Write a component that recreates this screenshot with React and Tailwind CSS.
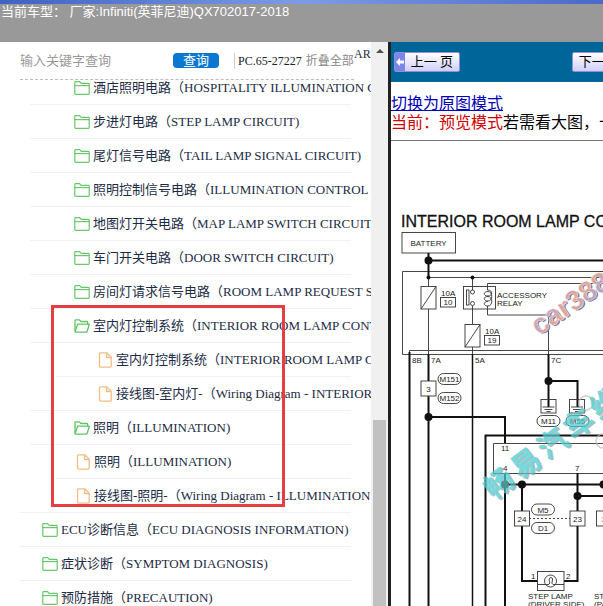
import React from "react";

const rows = [
  { icon: "folder", indent: "ml-[30px] pl-11", zh: "酒店照明电路", en: "HOSPITALITY ILLUMINATION CIRCUIT)" },
  { icon: "folder", indent: "ml-[30px] pl-11", zh: "步进灯电路", en: "STEP LAMP CIRCUIT)" },
  { icon: "folder", indent: "ml-[30px] pl-11", zh: "尾灯信号电路", en: "TAIL LAMP SIGNAL CIRCUIT)" },
  { icon: "folder", indent: "ml-[30px] pl-11", zh: "照明控制信号电路", en: "ILLUMINATION CONTROL SIGNAL CIRCUIT)" },
  { icon: "folder", indent: "ml-[30px] pl-11", zh: "地图灯开关电路", en: "MAP LAMP SWITCH CIRCUIT)" },
  { icon: "folder", indent: "ml-[30px] pl-11", zh: "车门开关电路", en: "DOOR SWITCH CIRCUIT)" },
  { icon: "folder", indent: "ml-[30px] pl-11", zh: "房间灯请求信号电路", en: "ROOM LAMP REQUEST SIGNAL CIRCUIT)" },
  { icon: "open", indent: "ml-[30px] pl-11", zh: "室内灯控制系统", en: "INTERIOR ROOM LAMP CONTROL SYSTEM)" },
  { icon: "file", indent: "ml-14 pl-[42px]", zh: "室内灯控制系统", en: "INTERIOR ROOM LAMP CONTROL SYSTEM)" },
  { icon: "file", indent: "ml-[30px] pl-[68px]", zh: "接线图-室内灯-", en: "Wiring Diagram - INTERIOR ROOM LAMP)" },
  { icon: "open", indent: "ml-[30px] pl-11", zh: "照明", en: "ILLUMINATION)" },
  { icon: "file", indent: "ml-14 pl-5", zh: "照明", en: "ILLUMINATION)" },
  { icon: "file", indent: "ml-5 pl-14", zh: "接线图-照明-", en: "Wiring Diagram - ILLUMINATION" },
  { icon: "folder", indent: "ml-5 pl-[22px]", zh: "ECU诊断信息", en: "ECU DIAGNOSIS INFORMATION)" },
  { icon: "folder", indent: "ml-5 pl-[22px]", zh: "症状诊断", en: "SYMPTOM DIAGNOSIS)" },
  { icon: "folder", indent: "ml-5 pl-[22px]", zh: "预防措施", en: "PRECAUTION)" },
];

const RowIcon = ({ type }) => {
  if (type === "file") {
    return (
      <svg className="h-4 w-[15px] shrink-0" viewBox="0 0 15 16" fill="none" stroke="#f3bd83" strokeWidth="1.3" strokeLinejoin="round">
        <path d="M1.5 2 Q1.5 .8 2.7 .8 H8.8 L13.2 5.2 V14 Q13.2 15.2 12 15.2 H2.7 Q1.5 15.2 1.5 14 Z" />
        <path d="M8.6 1 V5.5 H13" />
      </svg>
    );
  }
  if (type === "open") {
    return (
      <svg className="h-4 w-4 shrink-0" viewBox="0 0 16 16" fill="none" stroke="#5fc463" strokeWidth="1.3" strokeLinejoin="round">
        <path d="M1 13.5 V2.6 Q1 1.8 1.8 1.8 H5.4 L6.8 3.5 H12.8 Q13.6 3.5 13.6 4.3 V6" />
        <path d="M1 13.7 L3.6 6.2 H15.3 L13.3 13 Q13 14.2 12 14.2 H1.4 Z" />
      </svg>
    );
  }
  return (
    <svg className="h-4 w-4 shrink-0" viewBox="0 0 16 16" fill="none" stroke="#68c86b" strokeWidth="1.2" strokeLinejoin="round">
      <path d="M.8 2.4 Q.8 1.6 1.6 1.6 H5.6 L7.2 3.3 H14.4 Q15.2 3.3 15.2 4.1 V13.6 Q15.2 14.4 14.4 14.4 H1.6 Q.8 14.4 .8 13.6 Z" />
      <path d="M.8 5.6 H15.2" />
    </svg>
  );
};

const Pill = ({ x, y, w = 23, label }) => (
  <g>
    <rect x={x} y={y} width={w} height="11" rx="5.5" fill="#fff" stroke="#333" strokeWidth="0.9" />
    <text x={x + w / 2} y={y + 8.5} textAnchor="middle">{label}</text>
  </g>
);

const Pin = ({ x, y, label }) => (
  <g>
    <rect x={x - 7.5} y={y} width="15" height="15" fill="#fff" stroke="#333" strokeWidth="0.9" />
    <text x={x} y={y + 10.5} textAnchor="middle">{label}</text>
  </g>
);

const Fuse = ({ x, y, label }) => (
  <g fill="none" stroke="#333" strokeWidth="0.9">
    <rect x={x - 7.5} y={y} width="15" height="22.5" />
    <path d={`M${x - 7.5} ${y + 22.5} L${x + 7.5} ${y}`} />
    <rect x={x + 12} y={y + 11} width="15" height="9.5" />
    <g fill="#222" stroke="none">
      <text x={x + 12.5} y={y + 9.5}>10A</text>
      <text x={x + 19.5} y={y + 18.7} textAnchor="middle">{label}</text>
    </g>
  </g>
);

const Ground = ({ x }) => (
  <g fill="none" stroke="#333" strokeWidth="0.9">
    <rect x={x - 7.5} y="399.5" width="15" height="13.5" />
    <path d={`M${x - 6} 407 h12 M${x - 4} 409.5 h8 M${x - 2} 411.5 h4`} />
  </g>
);

const WiringDiagram = () => (
  <svg
    className="h-[465px] w-[212px] shrink-0 overflow-visible"
    viewBox="391 141 212 465"
    fontFamily="Liberation Sans, sans-serif"
    fontSize="8"
    fill="#222"
    role="img"
    aria-label="INTERIOR ROOM LAMP CONTROL SYSTEM"
  >
    <text x="401" y="227" fontSize="16" fill="#111" stroke="#111" strokeWidth="0.3">INTERIOR ROOM LAMP CONTROL</text>

    {/* thin lines */}
    <g fill="none" stroke="#333" strokeWidth="0.9">
      <rect x="402" y="232.5" width="53.5" height="20.5" />
      <path d="M640 271.5 H402.5 V354.5 H640" />
      <path d="M409.5 354 V350.5 H640" />
      <path d="M428.5 277.5 H640 M428.5 271 V286.5 M428.5 309 V354" />
      <path d="M472.5 277.5 V290 M472.5 306 V324 M472.5 347 V354" />
      <rect x="463.5" y="286.5" width="32" height="22.5" />
      <rect x="466.5" y="290" width="2.5" height="15" />
      <circle cx="472.5" cy="292" r="2" fill="#fff" />
      <circle cx="472.5" cy="303.5" r="2" fill="#fff" />
      <path d="M640 283.5 H487.5 V290 M487.5 306 V315 H548.5 V354" />
      <path d="M487.5 290 C493 290 493 296 488 296 C483 296 483 291.5 488 291.5 C493 291.5 493 301 488 301 C483 301 483 296.5 488 296.5 C493 296.5 493 306 488 306 C483 306 483 301.5 488 301.5" />
      <path d="M640 443.5 H493.5 V473.5 H640" />
      <path d="M529 518.5 H570" strokeDasharray="2 2" />
    </g>

    {/* power and ground wires */}
    <g fill="none" stroke="#111" strokeWidth="2">
      <path d="M428.5 253 V277 M428.5 260.5 H640" />
      <path d="M409.5 352 V610 M428.5 354 V610" />
      <path d="M472.5 354 V610" strokeWidth="1.5" />
      <path d="M428.5 417 H505 V443" />
      <path d="M548.5 354 V407 M548.5 381 H577.5 V407" />
      <path d="M640 435.5 H485.5 V610" />
      <path d="M505 473 V610 M505 484.5 H640" />
      <path d="M522 484.5 V581 H537.5 M577.5 473 V581 H564 M577.5 496 H640" />
    </g>
    <g fill="#111">
      <circle cx="428.5" cy="260.5" r="4" />
      <circle cx="428.5" cy="277.5" r="2" />
      <circle cx="472.5" cy="277.5" r="2" />
      <circle cx="428.5" cy="417" r="4" />
      <circle cx="548.5" cy="381" r="4" />
      <circle cx="505" cy="484.5" r="4" />
      <circle cx="522" cy="484.5" r="4" />
      <circle cx="603.5" cy="484.5" r="4" />
      <circle cx="577.5" cy="496" r="4" />
    </g>

    <Fuse x={428.5} y={286.5} label="10" />
    <Fuse x={472.5} y={324.5} label="19" />
    <Ground x={548.5} />
    <Ground x={577} />
    <Pin x={428.5} y={381} label="3" />
    <Pin x={522} y={511} label="24" />
    <Pin x={577.5} y={511} label="23" />
    <Pin x={604} y={511} label="3" />
    <Pill x={438} y={373.5} label="M151" />
    <Pill x={438} y={392.5} label="M152" />
    <Pill x={537} y={415.5} label="M11" />
    <Pill x={566} y={415.5} label="M55" />
    <Pill x={531.5} y={504} label="M5" />
    <Pill x={531.5} y={522.5} label="D1" />

    <text x="410.5" y="246">BATTERY</text>
    <text x="497" y="298">ACCESSORY</text>
    <text x="497" y="306">RELAY</text>
    <text x="412" y="363">8B</text>
    <text x="431" y="363">7A</text>
    <text x="475" y="363">5A</text>
    <text x="551" y="363">7C</text>
    <text x="501" y="451">11</text>
    <text x="503" y="471">4</text>
    <text x="575" y="471">7</text>

    <rect x="537.5" y="571.5" width="26.5" height="19" fill="#fff" stroke="#333" strokeWidth="0.9" />
    <circle cx="550.5" cy="581" r="6" fill="none" stroke="#333" strokeWidth="0.9" />
    <path d="M538 584.5 H548 Q551 584 549 580 Q549 577.5 551 577.5 Q553 577.5 552.5 580 Q551 584 553 584.5 H564" fill="none" stroke="#333" strokeWidth="0.9" />
    <text x="531" y="579">1</text>
    <text x="566" y="579">2</text>
    <text x="528" y="599">STEP LAMP</text>
    <text x="528" y="607">(DRIVER SIDE)</text>
    <text x="594" y="599">STEP LAMP</text>
    <text x="594" y="607">(PASSENGER SIDE)</text>

    {/* watermark */}
    <g fill="none" stroke="#bbb" strokeWidth="1.5" opacity="0.7">
      <circle cx="586" cy="403" r="7" />
      <circle cx="603" cy="441" r="7" />
    </g>
    <g transform="rotate(-34 542 334)" fontSize="28" fontWeight="bold">
      <text x="539" y="335" fill="#85779a">car388</text>
      <text x="538" y="333.5" fill="url(#tint)" stroke="#fff" strokeWidth="0.4">car388</text>
    </g>
    <g transform="rotate(-37 496 501)" fontFamily="Noto Sans CJK SC, sans-serif" fontSize="29" fontWeight="bold" opacity="0.75">
      <text x="495 529 562 595 628" y="501" fill="#8fa9ad">畅易汽车维</text>
      <text x="494 528 561 594 627" y="499" fill="#48cdd2">畅易汽车维</text>
    </g>
    <defs>
      <linearGradient id="tint" x1="0" y1="0" x2="1" y2="1">
        <stop offset="0" stopColor="#d8cf8c" />
        <stop offset="0.3" stopColor="#c9a3bd" />
        <stop offset="0.55" stopColor="#e3a88e" />
        <stop offset="0.8" stopColor="#a9a3cf" />
        <stop offset="1" stopColor="#d8cf8c" />
      </linearGradient>
    </defs>
  </svg>
);

const Sidebar = () => (
  <aside className="relative flex w-[388px] shrink-0 overflow-hidden bg-white">
    <div className="flex w-[371px] flex-col overflow-hidden">
      <form className="flex h-[38px] shrink-0 pl-5 text-[13px]" onSubmit={(e) => e.preventDefault()}>
        <div className="flex w-[334px] shrink-0 items-center border-b border-dashed border-[#bbb]">
          <input
            type="text"
            aria-label="输入关键字查询"
            placeholder="输入关键字查询"
            className="h-5 w-[153px] shrink-0 outline-none placeholder:text-[#999]"
          />
          <button
            type="submit"
            className="flex h-[15px] w-[46px] shrink-0 items-center justify-center rounded bg-[#0a78d0] text-white"
          >
            查询
          </button>
          <div className="ml-[15px] flex h-4 items-center gap-1 border-l border-[#ccc] pl-[3px] text-xs whitespace-nowrap">
            <span className="text-[#222]">PC.65-27227</span>
            <button type="button" className="text-[#888]">折叠全部</button>
          </div>
        </div>
        <span className="pt-1 text-xs leading-4 text-[#1c2b45]">AR</span>
      </form>

      <ul className="-mt-[9px]">
        {rows.map((row, i) => (
          <li key={i} className={`mr-5 h-[34px] border-b border-[#f1f1f1] ${row.indent}`}>
            <a href="#" className="flex h-full items-center gap-[3px] text-[13px] leading-4 whitespace-nowrap text-[#1c2b45]">
              <RowIcon type={row.icon} />
              <span>{row.zh}（{row.en}</span>
            </a>
          </li>
        ))}
      </ul>
    </div>

    <div className="flex w-[17px] flex-col items-center bg-[#f0f0f0]">
      <svg className="mt-[6px] h-[6px] w-2 shrink-0" viewBox="0 0 8 6">
        <path d="M4 1 L8 5 H0 Z" fill="#505050" />
      </svg>
      <div className="mt-[366px] w-[13px] flex-1 bg-[#c1c1c1]" />
    </div>

    <div className="pointer-events-none absolute top-[263px] left-[51px] h-[202px] w-[234px] border-3 border-[#e33e41]" />
  </aside>
);

const App = () => {
  return (
    <div className="flex h-screen flex-col overflow-hidden bg-white font-['Liberation_Serif','Noto_Sans_CJK_SC',serif]">
      <header className="h-[42px] shrink-0 bg-[#999] font-['Liberation_Sans','Noto_Sans_CJK_SC',sans-serif] text-[13px] leading-4 whitespace-nowrap text-white">
        <div className="h-1 bg-linear-to-r from-[#3f62c4] via-[#7c9ce6] to-[#4a6ac8]" />
        <h1 className="pl-px">当前车型： 厂家:Infiniti(英菲尼迪)QX702017-2018</h1>
      </header>

      <div className="flex min-h-0 flex-1">
        <Sidebar />
        <main className="flex min-w-0 flex-1 flex-col overflow-hidden border-l-3 border-[#222] bg-white">
          <nav className="flex h-10 shrink-0 items-center gap-28 bg-[#069] pl-[3px] text-[13px] whitespace-nowrap text-black">
            <button className="flex h-5 w-[66px] shrink-0 items-center rounded-xs border border-[#8d90dc] bg-linear-to-b from-white to-[#cfd0f8]">
              <span className="flex h-full w-[10px] items-center justify-center bg-[#7c86ea]">
                <svg className="h-2 w-2" viewBox="0 0 8 8">
                  <path d="M0 4 L4 0 V2.6 H8 V5.4 H4 V8 Z" fill="#fff" />
                </svg>
              </span>
              <span className="flex-1 text-center">上一 页</span>
            </button>
            <button className="flex h-5 w-[66px] shrink-0 items-center rounded-xs border border-[#8d90dc] bg-linear-to-b from-white to-[#cfd0f8]">
              <span className="flex-1 text-center">下一 页</span>
              <span className="flex h-full w-[10px] items-center justify-center bg-[#7c86ea]">
                <svg className="h-2 w-2" viewBox="0 0 8 8">
                  <path d="M8 4 L4 0 V2.6 H0 V5.4 H4 V8 Z" fill="#fff" />
                </svg>
              </span>
            </button>
          </nav>

          <div className="shrink-0 border-b border-[#777] pt-3 pb-2 text-base leading-[19px] whitespace-nowrap text-black">
            <a href="#" className="block text-[#0000b8] underline">切换为原图模式</a>
            <p>
              <span className="text-[#d00000]">当前：预览模式</span>若需看大图，十
            </p>
          </div>

          <WiringDiagram />
        </main>
      </div>
    </div>
  );
};

export default App;
